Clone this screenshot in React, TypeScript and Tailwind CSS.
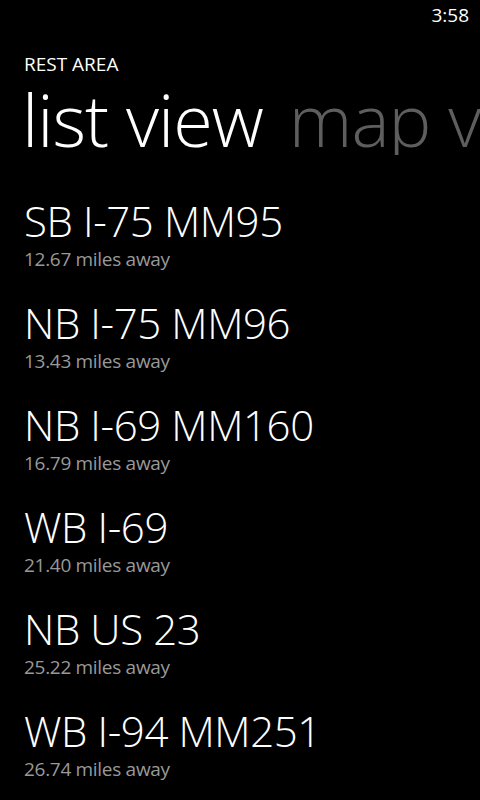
import React from "react";

const items = [
  { name: "SB I-75 MM95", dist: "12.67 miles away" },
  { name: "NB I-75 MM96", dist: "13.43 miles away" },
  { name: "NB I-69 MM160", dist: "16.79 miles away" },
  { name: "WB I-69", dist: "21.40 miles away" },
  { name: "NB US 23", dist: "25.22 miles away" },
  { name: "WB I-94 MM251", dist: "26.74 miles away" },
];

export default function App() {
  return (
    <div
      className="w-[480px] h-[800px] bg-black text-white overflow-hidden"
      style={{ fontFamily: '"Open Sans", "Noto Sans", sans-serif' }}
    >
      <div className="flex justify-end pt-[3px] pr-[11px]">
        <span className="text-[19px] leading-[24px]">3:58</span>
      </div>
      <div className="mt-[25px] pl-[24px] text-[19px] leading-[24px]">REST AREA</div>
      <div className="mt-[7px] pl-[22px] flex gap-[26px] whitespace-nowrap overflow-hidden text-[72px] leading-[72px] font-light tracking-[-1px]">
        <span>list view</span>
        <span className="text-[#5e5e5e]">map view</span>
      </div>
      <div className="mt-[43px] pl-[24px] flex flex-col">
        {items.map((it) => (
          <div key={it.name} className="pb-[28px]">
            <div className="text-[42px] leading-[46px] font-light tracking-[-0.4px] whitespace-nowrap">{it.name}</div>
            <div className="mt-[2px] text-[19px] leading-[26px] tracking-[-0.3px] text-[#999999] whitespace-nowrap">{it.dist}</div>
          </div>
        ))}
      </div>
    </div>
  );
}
